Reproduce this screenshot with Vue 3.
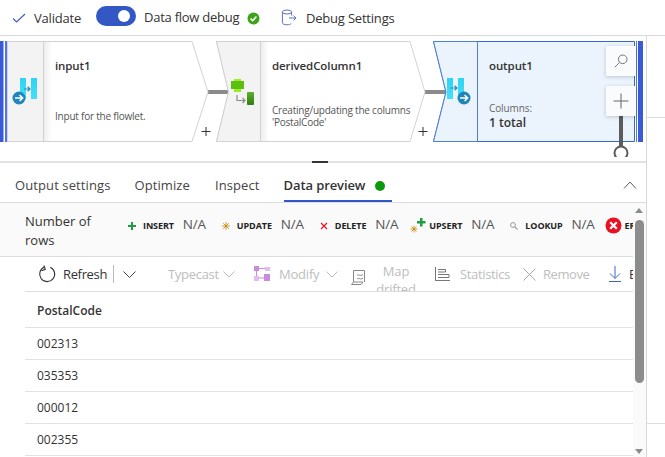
<script setup>
const stats = [
  { key: 'insert', label: 'INSERT', value: 'N/A' },
  { key: 'update', label: 'UPDATE', value: 'N/A' },
  { key: 'delete', label: 'DELETE', value: 'N/A' },
  { key: 'upsert', label: 'UPSERT', value: 'N/A' },
  { key: 'lookup', label: 'LOOKUP', value: 'N/A' },
]

const rows = ['002313', '035353', '000012', '002355']
</script>

<template>
  <div class="page">
    <header class="toolbar">
      <svg class="validate-icon" width="14" height="10" viewBox="0 0 14 10"><path d="M1 5.500 L4.600 9 L13 1" fill="none" stroke="#3f5bb8" stroke-width="1.100" /></svg>
      <span class="validate-text">Validate</span>
      <span class="toggle"><span class="knob"></span></span>
      <span class="debug-text">Data flow debug</span>
      <svg class="ok-icon" width="13" height="13" viewBox="0 0 13 13"><circle cx="6.500" cy="6.500" r="6" fill="#3ea31a" /><path d="M3.600 6.600 L5.700 8.700 L9.400 4.600" fill="none" stroke="#fff" stroke-width="1.500" /></svg>
      <svg class="settings-icon" width="16" height="17" viewBox="0 0 16 17" fill="none" stroke="#5a6fc0" stroke-width="1"><ellipse cx="6" cy="3" rx="4.600" ry="2" /><path d="M1.400 3 V13.500 C1.400 15 3.500 15.800 6 15.800 C8 15.800 9.600 15.300 10.300 14.400 M10.600 3 V6.500 M8 9 H15 M12.600 6.600 L15 9 L12.600 11.400" /></svg>
      <span class="settings-text">Debug Settings</span>
    </header>

    <div class="body">
      <div class="left">
        <div class="canvas">
          <svg class="graph" width="646" height="125" viewBox="0 36 646 125">
            <defs>
              <linearGradient id="cellShade" x1="0" x2="1" y1="0" y2="0"><stop offset="0" stop-color="#000" stop-opacity=".07" /><stop offset="1" stop-color="#000" stop-opacity="0" /></linearGradient>
              <linearGradient id="bar" x1="0" x2="0" y1="0" y2="1"><stop offset="0" stop-color="#2fd3f5" /><stop offset="1" stop-color="#45e0f7" /></linearGradient>
              <linearGradient id="leaf" x1="0" x2="0" y1="0" y2="1"><stop offset="0" stop-color="#5fb02c" /><stop offset="1" stop-color="#2f7d14" /></linearGradient>
            </defs>

            <rect x="208" y="90" width="20" height="4" fill="#8a8a8a" />
            <rect x="425" y="90" width="21" height="4" fill="#8a8a8a" />

            <!-- input1 -->
            <rect x="0" y="41" width="3.500" height="101" fill="#3b5bd6" />
            <rect x="5" y="41" width="2" height="101" fill="#4f78e6" />
            <path d="M7.500 41.500 H192 L208 92 L192 141.500 H7.500 Z" fill="#fff" stroke="#d2d2d2" />
            <rect x="7.500" y="41.500" width="36" height="100" fill="#f3f3f3" stroke="#d2d2d2" />
            <rect x="44" y="42" width="8" height="99" fill="url(#cellShade)" />
            <rect x="20" y="78" width="6" height="21" fill="url(#bar)" />
            <rect x="31" y="78" width="6" height="21" fill="url(#bar)" />
            <path d="M24 89 H30 M27.600 86.800 L30 89 L27.600 91.200" fill="none" stroke="#2a8cb5" stroke-width="1.200" />
            <circle cx="19" cy="98" r="6.500" fill="#1f86bd" />
            <path d="M15 98 H22.500 M19.600 95 L22.600 98 L19.600 101" fill="none" stroke="#fff" stroke-width="1.600" />

            <!-- derivedColumn1 -->
            <path d="M216.500 41.500 H410 L425 92 L410 141.500 H216.500 L228.500 92 Z" fill="#fff" stroke="#d2d2d2" />
            <path d="M216.500 41.500 H260.500 V141.500 H216.500 L228.500 92 Z" fill="#f3f3f3" stroke="#d2d2d2" />
            <rect x="261" y="42" width="8" height="99" fill="url(#cellShade)" />
            <path d="M234 79 H241 V81 H244 V89 H241 V92 H234 V89 H231 V81 H234 Z" fill="#9af01e" />
            <rect x="231" y="81" width="13" height="8" fill="#5cbf10" />
            <path d="M237 95 V100.500 H245 M242.600 98 L245 100.500 L242.600 103" fill="none" stroke="#8a8a8a" stroke-width="1.200" />
            <rect x="247" y="92" width="7" height="13" rx="1" fill="url(#leaf)" />

            <!-- output1 -->
            <path d="M433.500 41.500 H634.500 V141.500 H433.500 L446 92 Z" fill="#ebf3fc" stroke="#3b64d6" />
            <path d="M433.500 41.500 H477.500 V141.500 H433.500 L446 92 Z" fill="#ebf3fc" stroke="#4f7fdc" />
            <rect x="636" y="41" width="1" height="101" fill="#4f78e6" />
            <rect x="638" y="41" width="5" height="101" fill="#3b5bd6" />
            <rect x="447" y="78" width="6" height="21" fill="url(#bar)" />
            <rect x="458" y="78" width="6" height="21" fill="url(#bar)" />
            <path d="M450 88 H457 M454.600 85.800 L457 88 L454.600 90.200" fill="none" stroke="#2a8cb5" stroke-width="1.200" />
            <circle cx="464" cy="98" r="6.500" fill="#1f86bd" />
            <path d="M460 98 H467.500 M464.600 95 L467.600 98 L464.600 101" fill="none" stroke="#fff" stroke-width="1.600" />

            <!-- add stream handle -->
            <rect x="619" y="116" width="4" height="30" fill="#5c5c5c" />
            <circle cx="621" cy="153" r="6.500" fill="none" stroke="#5c5c5c" stroke-width="2" />
            <rect x="610" y="157" width="22" height="4" fill="#fff" />

            <!-- plus marks -->
            <path d="M201.500 131.500 H210.500 M206 127 V136" stroke="#333" stroke-width="1" />
            <path d="M418.500 131.500 H427.500 M423 127 V136" stroke="#333" stroke-width="1" />
          </svg>

          <div class="node node-input">
            <div class="node-title">input1</div>
            <div class="node-desc">Input for the flowlet.</div>
          </div>
          <div class="node node-derived">
            <div class="node-title">derivedColumn1</div>
            <div class="node-desc">Creating/updating the columns<br />'PostalCode'</div>
          </div>
          <div class="node node-output">
            <div class="node-title">output1</div>
            <div class="node-cols">Columns:</div>
            <div class="node-total">1 total</div>
          </div>

          <button class="float-btn btn-search">
            <svg width="14" height="14" viewBox="0 0 14 14" fill="none" stroke="#777" stroke-width="1"><circle cx="8.700" cy="5.300" r="4.300" /><path d="M5.600 8.400 L0.800 13.200" /></svg>
          </button>
          <button class="float-btn btn-plus">
            <svg width="16" height="16" viewBox="0 0 16 16" fill="none" stroke="#666" stroke-width="1"><path d="M0.500 8 H15.500 M8 0.500 V15.500" /></svg>
          </button>
          <span class="handle"></span>
        </div>

        <nav class="tabs">
          <span class="tab">Output settings</span>
          <span class="tab">Optimize</span>
          <span class="tab tab-inspect">Inspect</span>
          <span class="tab tab-active">Data preview<i class="dot"></i></span>
          <svg class="collapse" width="14" height="8" viewBox="0 0 14 8"><path d="M1 7.500 L7 1 L13 7.500" fill="none" stroke="#5a5a5a" stroke-width="1" /></svg>
        </nav>

        <div class="panel">
          <div class="panel-main">
            <div class="stats">
              <div class="stats-title">Number of rows</div>
              <div v-for="s in stats" :key="s.key" class="stat" :class="'stat-' + s.key">
                <svg v-if="s.key === 'insert'" width="8" height="8" viewBox="0 0 8 8"><path d="M3 0 H5 V3 H8 V5 H5 V8 H3 V5 H0 V3 H3 Z" fill="#1f9d45" /></svg>
                <svg v-else-if="s.key === 'update'" width="8" height="8" viewBox="0 0 8 8"><path d="M4 0 V8 M0 4 H8 M1.200 1.200 L6.800 6.800 M6.800 1.200 L1.200 6.800" stroke="#c9830e" stroke-width=".8" /></svg>
                <svg v-else-if="s.key === 'delete'" width="8" height="8" viewBox="0 0 8 8"><path d="M1 1 L7 7 M7 1 L1 7" stroke="#e81123" stroke-width="1.200" /></svg>
                <svg v-else-if="s.key === 'upsert'" width="16" height="15" viewBox="0 0 16 15"><path d="M4 7.500 V14.500 M.5 11 H7.500 M1.500 8.500 L6.500 13.500 M6.500 8.500 L1.500 13.500" stroke="#c9830e" stroke-width=".8" /><path d="M10 0 H12.500 V3 H15.500 V5.500 H12.500 V8.500 H10 V5.500 H7 V3 H10 Z" fill="#1f9d45" /></svg>
                <svg v-else width="8" height="8" viewBox="0 0 8 8" fill="none" stroke="#999"><circle cx="3" cy="3" r="2.400" /><path d="M4.800 4.800 L7.600 7.600" stroke-width="1.200" /></svg>
                <span class="stat-label">{{ s.label }}</span>
                <span class="stat-value">{{ s.value }}</span>
              </div>
              <div class="stat stat-error">
                <svg width="17" height="17" viewBox="0 0 17 17"><circle cx="8.500" cy="8.500" r="8" fill="#e81123" /><path d="M5.200 5.200 L11.800 11.800 M11.800 5.200 L5.200 11.800" stroke="#fff" stroke-width="2.200" /></svg>
                <span class="stat-label">ERROR</span>
              </div>
            </div>

            <div class="actions">
              <svg class="refresh-icon" width="18" height="18" viewBox="0 0 18 18" fill="none" stroke="#333" stroke-width="1.100"><path d="M6.500 2.100 A7.500 7.500 0 1 0 12.300 2.300" /><path d="M6.800 .4 V4.400 H2.800" transform="rotate(-20 6.800 3)" /></svg>
              <span class="act act-refresh">Refresh</span>
              <span class="act-sep"></span>
              <svg class="chev chev-dark" width="13" height="7" viewBox="0 0 13 7"><path d="M.5 .5 L6.500 6.500 L12.500 .5" /></svg>
              <span class="act act-off act-typecast">Typecast</span>
              <svg class="chev chev-off" width="12" height="7" viewBox="0 0 12 7"><path d="M.5 .5 L6 6 L11.500 .5" /></svg>
              <svg class="modify-icon" width="16" height="16" viewBox="0 0 16 16"><rect x="0" y="0" width="5" height="5" fill="#c98be0" /><rect x="11" y="1" width="5" height="4" fill="#e2bdef" /><rect x="0" y="10" width="5" height="5" fill="#e2bdef" /><rect x="10" y="8" width="6" height="7" fill="#c98be0" /><path d="M5 2.500 H11 M2.500 5 V10 M5 12 H10" stroke="#c98be0" /></svg>
              <span class="act act-off act-modify">Modify</span>
              <svg class="chev chev-off" width="12" height="7" viewBox="0 0 12 7"><path d="M.5 .5 L6 6 L11.500 .5" /></svg>
              <svg class="map-icon" width="16" height="17" viewBox="0 0 16 17" fill="none" stroke="#888" stroke-width="1"><path d="M2.500 13 V1.500 H13.500 V13 M.5 15.500 H10 L12 13 H2.500 Z" /><path d="M6 6.500 C8 4.500 9 8 12 5.500 M6 10 C8 8 9 11.500 12 9" /></svg>
              <span class="act-off act-map">Map drifted</span>
              <svg class="stats-icon" width="15" height="14" viewBox="0 0 15 14" fill="none" stroke="#777" stroke-width="1"><path d="M.5 0 V14 M.5 13.500 H15 M3 2.500 H10.500 V5 H3 M3 7.500 H14 V10.500 H3" /></svg>
              <span class="act act-off act-stats">Statistics</span>
              <svg class="remove-icon" width="13" height="13" viewBox="0 0 13 13" fill="none" stroke="#aaa" stroke-width="1"><path d="M.5 .5 L12.500 12.500 M12.500 .5 L.5 12.500" /></svg>
              <span class="act act-off act-remove">Remove</span>
              <svg class="download-icon" width="12" height="16" viewBox="0 0 12 16" fill="none" stroke="#3f64c8" stroke-width="1"><path d="M6 0 V12 M1 7.500 L6 12.500 L11 7.500 M0 15.500 H12" /></svg>
              <span class="act act-export">Export</span>
            </div>

            <div class="grid-row grid-head">PostalCode</div>
            <div v-for="r in rows" :key="r" class="grid-row">{{ r }}</div>
          </div>

          <div class="scrollbar">
            <span class="arrow-up"></span>
            <span class="thumb"></span>
            <span class="arrow-down"></span>
          </div>
        </div>
      </div>

      <div class="gutter">
        <div class="gutter-top"></div>
        <div class="gutter-bottom"></div>
      </div>
    </div>
  </div>
</template>

<style>
html, body {
  margin: 0;
  background: #fff;
}
</style>

<style scoped>
.page {
  width: 665px;
  height: 457px;
  overflow: hidden;
  font-family: "Open Sans", "Noto Sans", sans-serif;
  font-size: 13px;
  color: #333;
  background: #fff;
}

.toolbar {
  height: 35px;
  border-bottom: 1px solid #d8d8d8;
  display: flex;
  align-items: center;
  white-space: nowrap;
  padding-left: 12px;
}
.validate-text { margin-left: 8px; width: 54px; letter-spacing: -.2px; }
.toggle {
  width: 40px;
  height: 20px;
  margin-left: 8px;
  margin-top: -3px;
  border-radius: 10px;
  background: #3358c4;
  display: flex;
  align-items: center;
  justify-content: flex-end;
  padding-right: 6px;
  box-sizing: border-box;
}
.knob { width: 12px; height: 12px; border-radius: 50%; background: #fff; }
.debug-text { margin-left: 8px; width: 102px; margin-top: -2px; letter-spacing: -.25px; }
.ok-icon { margin-top: 2px; margin-left: 1px; }
.settings-icon { margin-left: 21px; }
.settings-text { margin-left: 9px; letter-spacing: -.2px; }

.body { display: flex; height: 422px; }
.left {
  width: 646px;
  flex: none;
  border-right: 1px solid #d8d8d8;
  box-sizing: content-box;
}
.gutter { flex: 1; }
.gutter-top { height: 81px; border-bottom: 1px solid #ddd; }
.gutter-bottom { height: 305px; border-bottom: 1px solid #ddd; }

.canvas {
  position: relative;
  height: 125px;
  border-bottom: 2px solid #e2e2e2;
}
.graph { position: absolute; left: 0; top: 0; display: block; }

.node { position: absolute; top: 0; height: 100%; white-space: nowrap; }
.node-input { left: 55px; }
.node-derived { left: 272px; }
.node-output { left: 489px; }
.node-title { position: absolute; top: 21px; left: 0; font-weight: 600; font-size: 11.500px; letter-spacing: -.1px; line-height: 18px; color: #333; }
.node-desc { position: absolute; left: 0; font-size: 10px; letter-spacing: -.22px; line-height: 12px; color: #555; }
.node-input .node-desc { top: 74px; }
.node-derived .node-desc { top: 68px; }
.node-cols { position: absolute; top: 66px; font-size: 10px; letter-spacing: -.1px; line-height: 12px; color: #666; }
.node-total { position: absolute; top: 79px; font-size: 12px; font-weight: 600; line-height: 16px; }

.float-btn {
  position: absolute;
  left: 606px;
  width: 30px;
  height: 30px;
  padding: 0;
  border: 0;
  background: #fafbfd;
  box-shadow: 0 1px 4px rgba(0, 0, 0, .2);
  display: flex;
  align-items: center;
  justify-content: center;
}
.btn-search { top: 10px; }
.btn-plus { top: 50px; }
.handle {
  position: absolute;
  left: 312px;
  bottom: -2px;
  width: 16px;
  height: 2px;
  background: #333;
}

.tabs {
  height: 39px;
  padding-left: 15px;
  border-bottom: 1px solid #ddd;
  display: flex;
  align-items: flex-start;
  position: relative;
  font-size: 13px;
  white-space: nowrap;
}
.tab { margin-right: 24px; color: #444; letter-spacing: .1px; line-height: 44px; height: 39px; box-sizing: border-box; }
.tab-inspect { margin-left: 1px; margin-right: 24px; }
.tab-active {
  font-weight: 600;
  color: #333;
  margin-right: 0;
  width: 108px;
  border-bottom: 2px solid #3358c4;
  font-size: 13px;
  letter-spacing: -.1px;
  line-height: 44px;
}
.dot {
  display: inline-block;
  width: 10px;
  height: 10px;
  border-radius: 50%;
  background: #0c9a0c;
  margin-left: 10px;
  vertical-align: -1px;
}
.collapse { position: absolute; left: 623px; top: 18px; }

.panel { display: flex; height: 254px; }
.panel-main { width: 633px; flex: none; overflow: hidden; }

.stats {
  height: 53px;
  background: #fafafa;
  border-bottom: 1px solid #ddd;
  display: flex;
  align-items: center;
  white-space: nowrap;
  padding-left: 25px;
}
.stats-title { width: 72px; white-space: normal; line-height: 19px; margin-top: 3px; flex: none; font-size: 13px; color: #333; }
.stat { display: flex; align-items: center; flex: none; height: 20px; margin-top: -8px; }
.stat-label { font-size: 9px; font-weight: 700; color: #222; margin-left: 7px; letter-spacing: -.1px; line-height: 14px; margin-top: 1px; }
.stat-value { font-size: 13.500px; color: #555; margin-left: 9px; width: 23px; letter-spacing: -.2px; margin-top: -4px; }
.stat-insert { margin-left: 31px; }
.stat-update { margin-left: 16px; }
.stat-delete { margin-left: 16px; }
.stat-upsert { margin-left: 12px; }
.stat-upsert .stat-label { margin-left: 3px; }
.stat-lookup { margin-left: 16px; }
.stat-error { margin-left: 10px; }
.stat-error .stat-label { margin-left: 3px; }

.actions {
  height: 34px;
  margin-left: 25px;
  width: 608px;
  border-bottom: 1px solid #ddd;
  display: flex;
  align-items: center;
  white-space: nowrap;
  overflow: hidden;
  padding-left: 13px;
  box-sizing: content-box;
  font-size: 13px;
}
.act { letter-spacing: -.2px; flex: none; }
.act-off { color: #bdbdbd; }
.refresh-icon { flex: none; }
.act-refresh { margin-left: 7px; width: 46px; letter-spacing: -.35px; }
.act-sep { width: 1px; height: 18px; background: #bbb; margin-left: 4px; flex: none; }
.chev { fill: none; flex: none; }
.chev-dark { stroke: #444; margin-left: 9px; }
.chev-off { stroke: #bbb; margin-left: 6px; }
.act-typecast { margin-left: 32px; width: 49px; letter-spacing: -.3px; }
.modify-icon { margin-left: 19px; flex: none; }
.act-modify { margin-left: 9px; width: 41px; }
.map-icon { margin-left: 13px; margin-top: 6px; flex: none; }
.act-map {
  width: 40px;
  margin-left: 9px;
  flex: none;
  white-space: normal;
  text-align: center;
  align-self: flex-start;
  margin-top: 5px;
  line-height: 18px;
  letter-spacing: -.2px;
}
.stats-icon { margin-left: 19px; flex: none; }
.act-stats { margin-left: 10px; width: 50px; letter-spacing: -.35px; }
.remove-icon { margin-left: 13px; flex: none; }
.act-remove { margin-left: 7px; width: 47px; letter-spacing: -.45px; }
.download-icon { margin-left: 19px; flex: none; }
.act-export { margin-left: 8px; }

.grid-row {
  height: 31px;
  margin-left: 25px;
  width: 607px;
  padding-left: 12px;
  box-sizing: content-box;
  border-bottom: 1px solid #e2e2e2;
  line-height: 31px;
  font-size: 12px;
  color: #333;
}
.grid-head { height: 35px; line-height: 37px; font-weight: 600; font-size: 12px; }

.scrollbar {
  flex: none;
  width: 13px;
  position: relative;
  background: #fafafa;
}
.thumb {
  position: absolute;
  left: 2px;
  top: 17px;
  width: 9px;
  height: 163px;
  border-radius: 5px;
  background: #8c8c8c;
}
.arrow-up, .arrow-down {
  position: absolute;
  left: 2px;
  width: 0;
  height: 0;
  border-left: 4.500px solid transparent;
  border-right: 4.500px solid transparent;
}
.arrow-up { top: 5px; border-bottom: 5px solid #8c8c8c; }
.arrow-down { top: 246px; border-top: 5px solid #8c8c8c; }
</style>
